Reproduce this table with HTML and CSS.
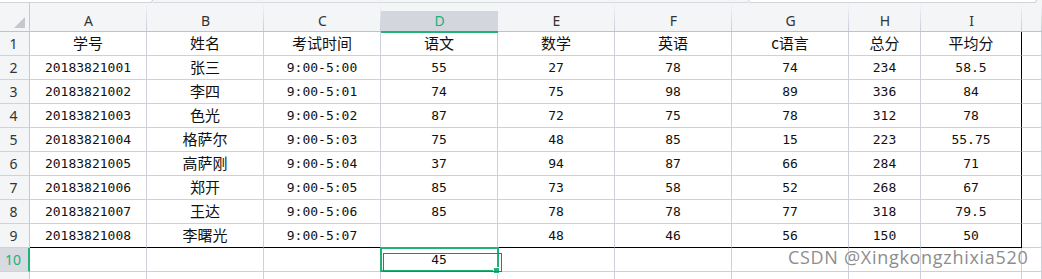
FILE: index.html
```html
<!DOCTYPE html>
<html lang="zh">
<head>
<meta charset="utf-8">
<title>Sheet</title>
<link rel="stylesheet" href="styles.css">
</head>
<body>
<div class="app">
  <div class="tabs">
    <div class="tab tab-left"></div>
    <div class="tab-gap"></div>
    <div class="tab tab-right"></div>
    <div class="tab-end"></div>
  </div>
  <div class="sheet">
    <div class="row head">
      <div class="corner"><span class="tri"></span></div>
      <div class="ch"><span>A</span></div>
      <div class="ch"><span>B</span></div>
      <div class="ch"><span>C</span></div>
      <div class="ch sel"><span>D</span></div>
      <div class="ch"><span>E</span></div>
      <div class="ch"><span>F</span></div>
      <div class="ch"><span>G</span></div>
      <div class="ch"><span>H</span></div>
      <div class="ch"><span>I</span></div>
      <div class="ch"><span></span></div>
    </div>

    <div class="row">
      <div class="rh">1</div>
      <div class="c zh">学号</div><div class="c zh">姓名</div><div class="c zh">考试时间</div><div class="c zh">语文</div><div class="c zh">数学</div><div class="c zh">英语</div><div class="c zh">c语言</div><div class="c zh">总分</div><div class="c zh r">平均分</div><div class="c"></div>
    </div>
    <div class="row">
      <div class="rh">2</div>
      <div class="c">20183821001</div><div class="c zh">张三</div><div class="c">9:00-5:00</div><div class="c">55</div><div class="c">27</div><div class="c">78</div><div class="c">74</div><div class="c">234</div><div class="c r">58.5</div><div class="c"></div>
    </div>
    <div class="row">
      <div class="rh">3</div>
      <div class="c">20183821002</div><div class="c zh">李四</div><div class="c">9:00-5:01</div><div class="c">74</div><div class="c">75</div><div class="c">98</div><div class="c">89</div><div class="c">336</div><div class="c r">84</div><div class="c"></div>
    </div>
    <div class="row">
      <div class="rh">4</div>
      <div class="c">20183821003</div><div class="c zh">色光</div><div class="c">9:00-5:02</div><div class="c">87</div><div class="c">72</div><div class="c">75</div><div class="c">78</div><div class="c">312</div><div class="c r">78</div><div class="c"></div>
    </div>
    <div class="row">
      <div class="rh">5</div>
      <div class="c">20183821004</div><div class="c zh">格萨尔</div><div class="c">9:00-5:03</div><div class="c">75</div><div class="c">48</div><div class="c">85</div><div class="c">15</div><div class="c">223</div><div class="c r">55.75</div><div class="c"></div>
    </div>
    <div class="row">
      <div class="rh">6</div>
      <div class="c">20183821005</div><div class="c zh">高萨刚</div><div class="c">9:00-5:04</div><div class="c">37</div><div class="c">94</div><div class="c">87</div><div class="c">66</div><div class="c">284</div><div class="c r">71</div><div class="c"></div>
    </div>
    <div class="row">
      <div class="rh">7</div>
      <div class="c">20183821006</div><div class="c zh">郑开</div><div class="c">9:00-5:05</div><div class="c">85</div><div class="c">73</div><div class="c">58</div><div class="c">52</div><div class="c">268</div><div class="c r">67</div><div class="c"></div>
    </div>
    <div class="row">
      <div class="rh">8</div>
      <div class="c">20183821007</div><div class="c zh">王达</div><div class="c">9:00-5:06</div><div class="c">85</div><div class="c">78</div><div class="c">78</div><div class="c">77</div><div class="c">318</div><div class="c r">79.5</div><div class="c"></div>
    </div>
    <div class="row">
      <div class="rh">9</div>
      <div class="c b">20183821008</div><div class="c zh b">李曙光</div><div class="c b">9:00-5:07</div><div class="c b"></div><div class="c b">48</div><div class="c b">46</div><div class="c b">56</div><div class="c b">150</div><div class="c b r">50</div><div class="c"></div>
    </div>
    <div class="row">
      <div class="rh sel">10</div>
      <div class="c"></div><div class="c"></div><div class="c"></div>
      <div class="c active"><span class="val">45</span><span class="handle"></span></div>
      <div class="c"></div><div class="c"></div><div class="c"></div><div class="c"></div><div class="c"></div><div class="c"></div>
    </div>
    <div class="row">
      <div class="rh">11</div>
      <div class="c"></div><div class="c"></div><div class="c"></div><div class="c"></div><div class="c"></div><div class="c"></div><div class="c"></div><div class="c"></div><div class="c"></div><div class="c"></div>
    </div>
  </div>
  <div class="mark"></div>
  <div class="watermark">CSDN @Xingkongzhixia520</div>
</div>
</body>
</html>
```

FILE: styles.css
```css
* { box-sizing: border-box; }
html, body {
  margin: 0;
  padding: 0;
  background: #ffffff;
}
body {
  width: 1042px;
  height: 279px;
  overflow: hidden;
}
.app {
  position: relative;
  width: 1042px;
  height: 279px;
  overflow: hidden;
  background: #f4f5f7;
}

/* top strip */
.tabs {
  display: flex;
  height: 3px;
}
.tab {
  height: 3px;
  background: #ffffff;
  border-bottom: 1px solid #cfd3da;
}
.tab-left {
  width: 153px;
  border-right: 1px solid #cfd3da;
  border-bottom-right-radius: 3px;
}
.tab-gap {
  width: 595px;
  border-bottom: 1px solid #d6d9df;
}
.tab-right {
  width: 289px;
  border-left: 1px solid #cfd3da;
  border-right: 1px solid #cfd3da;
  border-bottom-left-radius: 3px;
  border-bottom-right-radius: 3px;
}
.tab-end { flex: 1; }

/* grid */
.sheet {
  display: flex;
  flex-direction: column;
  background: #ffffff;
}
.row {
  display: grid;
  grid-template-columns: 30px repeat(7, 117px) 72px 101px 1fr;
  height: 24px;
}
.row.head {
  height: 29px;
  background: #f4f5f7;
}

.corner {
  border-right: 1px solid #c3c9d5;
  border-bottom: 1px solid #bcc3d0;
  display: flex;
  align-items: flex-end;
  justify-content: flex-end;
  padding: 0 4px 3px 0;
}
.tri {
  width: 0;
  height: 0;
  border-style: solid;
  border-width: 0 0 11px 11px;
  border-color: transparent transparent #c4c7cd transparent;
}

.ch {
  padding-top: 8px;
  border-bottom: 1px solid #bcc3d0;
  background-image: linear-gradient(to bottom, rgba(200,205,216,0) 0%, #c8cdd8 100%);
  background-size: 1px 100%;
  background-position: right top;
  background-repeat: no-repeat;
  font-family: "Noto Sans", "Liberation Sans", sans-serif;
  font-size: 14px;
  color: #333333;
}
.ch span {
  display: block;
  height: 20px;
  line-height: 20px;
  text-align: center;
}
.ch.sel {
  position: relative;
  border-bottom: 2px solid #20b276;
  margin-bottom: -1px;
  height: 30px;
  background-image: none;
}
.ch.sel span {
  background: #d3d6dc;
  color: #1fb076;
}

.rh {
  background: #f4f5f7;
  border-right: 1px solid #c3c9d5;
  border-bottom: 1px solid #cdd2dd;
  font-family: "Noto Sans", "Liberation Sans", sans-serif;
  font-size: 14px;
  color: #333333;
  text-align: center;
  line-height: 23px;
  padding-right: 2px;
}
.rh.sel {
  background: #d7dae0;
  color: #1fb076;
  border-right: 2px solid #20b276;
}

.c {
  border-right: 1px solid #cbd0dc;
  border-bottom: 1px solid #cbd0dc;
  font-family: "DejaVu Sans Mono", "Liberation Mono", monospace;
  font-size: 13px;
  color: #111111;
  text-align: center;
  line-height: 23px;
  white-space: nowrap;
  overflow: visible;
}
.c.zh {
  font-family: "Noto Sans CJK SC", "Noto Sans", sans-serif;
  font-size: 15px;
  line-height: 22px;
}
.c.b { border-bottom-color: #000000; }
.c.r { border-right-color: #000000; }

.c.active {
  position: relative;
}
.c.active::before {
  content: "";
  position: absolute;
  top: -1px;
  left: -1px;
  right: -2px;
  bottom: -1px;
  border: 2px solid #20b276;
}
.val {
  position: relative;
}
.handle {
  position: absolute;
  right: -3px;
  bottom: -3px;
  width: 5px;
  height: 5px;
  background: #20b276;
  border: 1px solid #ffffff;
  box-sizing: content-box;
  z-index: 2;
}

/* annotation rectangle drawn over the selected cell */
.mark {
  position: absolute;
  left: 383px;
  top: 253px;
  width: 119px;
  height: 19px;
  border: 1px solid #ee2b2b;
  z-index: 3;
}

.watermark {
  position: absolute;
  left: 788px;
  top: 246px;
  font-family: "Open Sans", "Noto Sans", sans-serif;
  font-size: 18px;
  line-height: 22px;
  letter-spacing: 0.7px;
  color: #8d8d8d;
  text-shadow: 0 0 1px #ffffff;
  white-space: nowrap;
  z-index: 4;
}
```
